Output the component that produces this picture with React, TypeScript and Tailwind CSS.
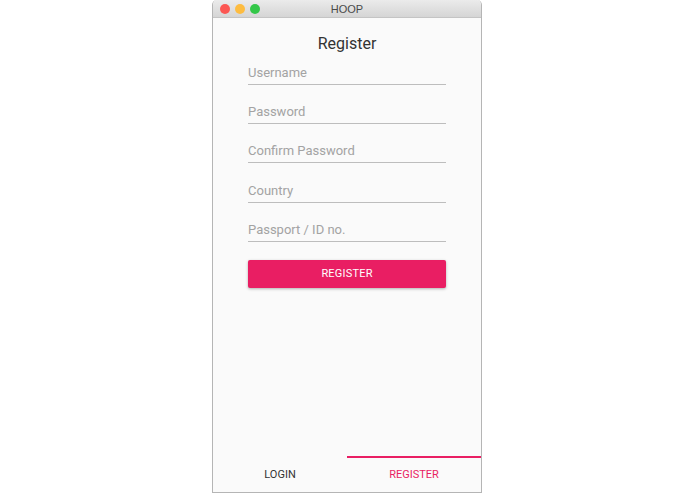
import React from "react";

const fields = ["Username", "Password", "Confirm Password", "Country", "Passport / ID no."];

export default function App() {
  return (
    <div className="w-full h-[494px] bg-white overflow-hidden font-['Roboto',sans-serif]">
      <div className="ml-[212px] w-[270px] h-[493px] flex flex-col border-x border-b border-[#b5b5b5] rounded-t-[5px] overflow-hidden bg-[#fafafa]">
        {/* title bar */}
        <div className="relative h-[18px] shrink-0 bg-gradient-to-b from-[#ebebeb] to-[#d5d5d5] border-b border-[#c4c4c4] flex items-center justify-center pt-[2px]">
          <div className="absolute left-[7px] top-[4px] flex gap-[5px]">
            <span className="w-[10px] h-[10px] rounded-full bg-[#fc5753]" />
            <span className="w-[10px] h-[10px] rounded-full bg-[#fdbc40]" />
            <span className="w-[10px] h-[10px] rounded-full bg-[#33c748]" />
          </div>
          <span className="text-[11px] leading-none text-[#4a4a4a] font-['Liberation_Sans',sans-serif]">HOOP</span>
        </div>

        <div className="flex-1 flex flex-col">
          <h1 className="pt-[16px] text-center text-[16px] leading-[20px] text-[#333]">Register</h1>

          <div className="mt-[6px] mx-[35px] flex flex-col gap-[14px]">
            {fields.map((f, i) => (
              <div
                key={f}
                className={`pt-[5px] pb-[3px] leading-[16px] text-[13px] text-[#a3a3a3] border-b border-[#bdbdbd] ${
                  i === 3 ? "mt-[1px]" : ""
                }`}
              >
                {f}
              </div>
            ))}
          </div>

          <button className="mt-[18px] mx-[35px] h-[28px] rounded-[2px] bg-[#e91e63] text-white text-[11px] tracking-[0.2px] shadow-[0_1px_3px_rgba(0,0,0,0.3)]">
            REGISTER
          </button>

          <div className="flex-1" />

          <div className="h-[36px] flex">
            <div className="flex-1 flex items-center justify-center text-[11px] text-[#333] border-t-2 border-transparent">
              LOGIN
            </div>
            <div className="flex-1 flex items-center justify-center text-[11px] text-[#e91e63] border-t-2 border-[#e91e63]">
              REGISTER
            </div>
          </div>
        </div>
      </div>
    </div>
  );
}
